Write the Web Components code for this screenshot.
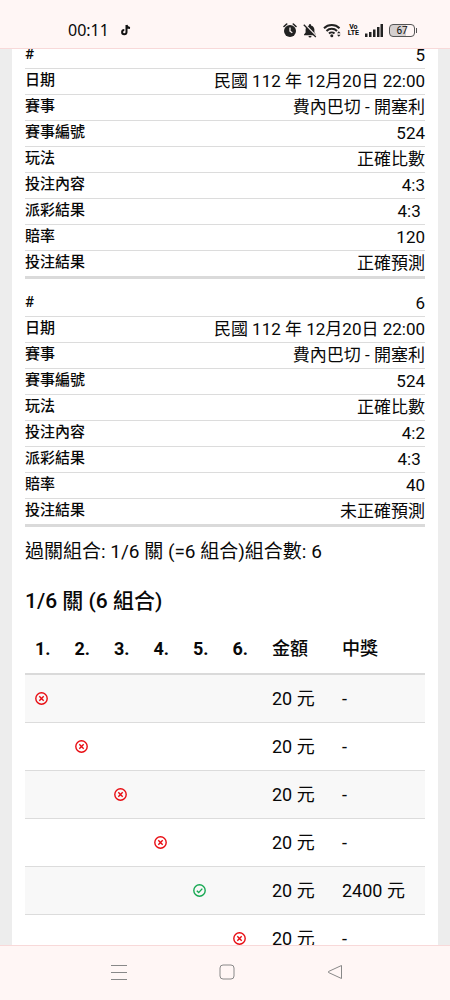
<!DOCTYPE html>
<html lang="zh-Hant">
<head>
<meta charset="utf-8">
<meta name="viewport" content="width=device-width, initial-scale=1">
<title>投注紀錄</title>
<style>
	body {
		margin: 0;
		height: 100vh;
		display: flex;
		flex-direction: column;
		background: #ededed;
		color: #080808;
		font-family: Roboto, 'Noto Sans CJK TC', sans-serif;
	}
</style>
</head>
<body>
<status-bar time="00:11" battery="67"></status-bar>
<scroll-view offset="18">
	<bet-record number="5" pick="4:3" score="4:3" odds="120" result="正確預測"></bet-record>
	<bet-record number="6" pick="4:2" score="4:3" odds="40" result="未正確預測"></bet-record>
	<combo-section>
		<span slot="summary">過關組合: 1/6 關 (=6 組合)組合數: 6</span>
		<span slot="title">1/6 關 (6 組合)</span>
		<combo-table legs="6" winner="5" prize="2400 元"></combo-table>
	</combo-section>
</scroll-view>
<nav-bar></nav-bar>

<script>
class StatusBar extends HTMLElement {
	constructor() {
		super();
		this.root = this.attachShadow({ mode: 'open' });
	}
	connectedCallback() {
		this.root.innerHTML = `
			<style>
				:host {
					display: flex;
					flex: none;
					align-items: center;
					justify-content: space-between;
					box-sizing: border-box;
					height: 49px;
					padding: 12px 33px 0 68px;
					background: #fff6f5;
					border-bottom: 1px solid #f8d9d9;
				}
				.group {
					display: flex;
					align-items: center;
				}
				.clock {
					gap: 12px;
					font: 16px/18px 'Noto Sans', sans-serif;
				}
				.icons {
					gap: 6px;
				}
				svg {
					display: block;
				}
				.volte {
					font: bold 7px/6px Roboto, sans-serif;
					text-align: center;
				}
				.battery {
					display: flex;
					align-items: center;
					gap: 1px;
				}
				.level {
					width: 26px;
					box-sizing: border-box;
					border: 1px solid #555;
					border-radius: 4px;
					background: linear-gradient(90deg, #d5d0d0 67%, transparent 67%);
					font: 10px/11px Roboto, sans-serif;
					text-align: center;
				}
				.tip {
					width: 1px;
					height: 5px;
					background: #555;
				}
			</style>
			<div class="group clock">
				<span>${this.getAttribute('time')}</span>
				<svg width="10" height="12" viewBox="0 0 10 12" fill="none" stroke="#111" stroke-width="2">
					<path d="M5.5 1v7.2a2.2 2.2 0 1 1-2.2-2.3M5.5 1c.3 1.8 1.5 2.8 3.5 3"/>
				</svg>
			</div>
			<div class="group icons">
				<svg width="14" height="15" viewBox="0 0 14 15">
					<circle cx="7" cy="8" r="6" fill="#222"/>
					<path d="M1 3.5 3.7 1M13 3.5 10.3 1" stroke="#222" stroke-width="1.6" stroke-linecap="round"/>
					<path d="M7 4.5V8.2L9.3 9.8" fill="none" stroke="#fff6f5" stroke-width="1.3"/>
				</svg>
				<svg width="14" height="15" viewBox="0 0 14 15">
					<path d="M7 1a1 1 0 0 1 1 1v.4c2 .5 3.400 2 3.400 4.200v3L13 11.500v.7H1v-.7l1.600-1.900v-3C2.600 4.400 4 2.900 6 2.400V2a1 1 0 0 1 1-1zM5.500 13h3a1.500 1.500 0 0 1-3 0z" fill="#222"/>
					<path d="M1.500 1 13.500 13.500" stroke="#fff6f5" stroke-width="1.800"/>
					<path d="M.8 1.800 12.800 14" stroke="#222" stroke-width="1.300"/>
				</svg>
				<svg width="19" height="15" viewBox="0 0 19 15" fill="none" stroke="#222" stroke-width="2">
					<path d="M1 5.300a11 11 0 0 1 15.500 0M3.500 8a7.500 7.500 0 0 1 10.500 0M6 10.500a4 4 0 0 1 5.500 0"/>
					<circle cx="8.800" cy="12.800" r="1.500" fill="#222" stroke="none"/>
					<path d="M14 10.300l1.800-2 1.800 2zM14 11.700l1.800 2 1.800-2z" fill="#222" stroke="none"/>
				</svg>
				<div class="volte">Vo<br>LTE</div>
				<svg width="18" height="13" viewBox="0 0 18 13" fill="#222">
					<path d="M0 9.500h2.500V13H0zM4 8h2.500v5H4zM8 5.500h2.500V13H8zM12 3h2.500v10H12zM15.500 0H18v13h-2.500z"/>
				</svg>
				<div class="battery">
					<div class="level">${this.getAttribute('battery')}</div>
					<div class="tip"></div>
				</div>
			</div>
		`;
	}
}

class ScrollView extends HTMLElement {
	constructor() {
		super();
		this.root = this.attachShadow({ mode: 'open' });
		this.root.innerHTML = `
			<style>
				:host {
					display: block;
					flex: 1;
					min-height: 0;
					margin: 0 12px;
					overflow: hidden;
					background: #fff;
				}
				.content {
					padding: 0 13px;
				}
			</style>
			<div class="content"><slot></slot></div>
		`;
	}
	restore() {
		this.scrollTop = Number(this.getAttribute('offset'));
	}
}

class BetRecord extends HTMLElement {
	constructor() {
		super();
		this.root = this.attachShadow({ mode: 'open' });
	}
	connectedCallback() {
		const rows = [
			['#', this.getAttribute('number')],
			['日期', '民國 112 年 12月20日 22:00'],
			['賽事', '費內巴切 - 開塞利'],
			['賽事編號', '524'],
			['玩法', '正確比數'],
			['投注內容', this.getAttribute('pick')],
			['派彩結果', this.getAttribute('score') + '&nbsp;'],
			['賠率', this.getAttribute('odds')],
			['投注結果', this.getAttribute('result')],
		];
		this.root.innerHTML = `
			<style>
				:host {
					display: block;
					padding-top: 12px;
					border-bottom: 3px solid #dadada;
				}
				table {
					width: 100%;
					border-spacing: 0;
				}
				th, td {
					height: 25px;
					padding: 0;
					border-bottom: 1px solid #dcdcdc;
					vertical-align: top;
				}
				tr:last-child > * {
					border-bottom: 0;
				}
				th {
					font-size: 15px;
					line-height: 22px;
					font-weight: 500;
					text-align: left;
				}
				td {
					font-size: 17px;
					line-height: 25px;
					text-align: right;
				}
			</style>
			<table>
				${rows.map(([name, value]) => `<tr><th scope="row">${name}</th><td>${value}</td></tr>`).join('')}
			</table>
		`;
	}
}

class ComboSection extends HTMLElement {
	constructor() {
		super();
		this.root = this.attachShadow({ mode: 'open' });
		this.root.innerHTML = `
			<style>
				:host {
					display: block;
				}
				p {
					margin: 12px 0 23px;
					font-size: 19px;
					line-height: 26px;
				}
				h2 {
					margin: 0 0 10px;
					font-size: 21px;
					line-height: 26px;
					font-weight: 500;
				}
			</style>
			<p><slot name="summary"></slot></p>
			<h2><slot name="title"></slot></h2>
			<slot></slot>
		`;
	}
}

class ComboTable extends HTMLElement {
	constructor() {
		super();
		this.root = this.attachShadow({ mode: 'open' });
	}
	connectedCallback() {
		const legs = Number(this.getAttribute('legs'));
		const winner = Number(this.getAttribute('winner'));
		const numbers = Array.from({ length: legs }, (_, i) => i + 1);
		const row = (n) => `
			<tr>
				${numbers.map((leg) => `<td>${leg === n ? `<result-mark ${n === winner ? 'won' : ''}></result-mark>` : ''}</td>`).join('')}
				<td>20 元</td>
				<td>${n === winner ? this.getAttribute('prize') : '-'}</td>
			</tr>`;
		this.root.innerHTML = `
			<style>
				:host {
					display: block;
				}
				table {
					width: 100%;
					table-layout: fixed;
					border-spacing: 0;
					font-size: 18px;
					line-height: 24px;
				}
				th, td {
					box-sizing: border-box;
					height: 48px;
					padding: 0 0 0 10px;
					text-align: left;
					white-space: nowrap;
				}
				th {
					height: 51px;
					border-bottom: 2px solid #dadada;
					font-weight: 700;
				}
				th.text {
					font-weight: 500;
				}
				.amount {
					width: 70px;
				}
				.prize {
					width: 93px;
				}
				td {
					border-bottom: 1px solid #dcdcdc;
				}
				tbody tr:nth-child(odd) {
					background: #f8f8f8;
				}
			</style>
			<table>
				<thead>
					<tr>
						${numbers.map((n) => `<th scope="col">${n}.</th>`).join('')}
						<th scope="col" class="text amount">金額</th>
						<th scope="col" class="text prize">中獎</th>
					</tr>
				</thead>
				<tbody>${numbers.map(row).join('')}</tbody>
			</table>
		`;
	}
}

class ResultMark extends HTMLElement {
	constructor() {
		super();
		this.root = this.attachShadow({ mode: 'open' });
	}
	connectedCallback() {
		const won = this.hasAttribute('won');
		this.root.innerHTML = `
			<style>
				:host {
					display: block;
					color: ${won ? '#16a852' : '#e80c12'};
				}
				svg {
					display: block;
				}
			</style>
			<svg width="13" height="13" viewBox="0 0 13 13" fill="none" stroke="currentColor" stroke-width="1.4">
				<circle cx="6.500" cy="6.500" r="5.700"/>
				<path d="${won ? 'M3.800 6.800 5.700 8.600 9.300 4.600' : 'M4.300 4.300l4.400 4.400M8.700 4.300 4.300 8.700'}"/>
			</svg>
		`;
	}
}

class NavBar extends HTMLElement {
	constructor() {
		super();
		this.root = this.attachShadow({ mode: 'open' });
		this.root.innerHTML = `
			<style>
				:host {
					display: flex;
					flex: none;
					align-items: center;
					justify-content: center;
					gap: 92px;
					box-sizing: border-box;
					height: 55px;
					padding: 0 0 2px 3px;
					background: #fff6f5;
					border-top: 1px solid #f8d9d9;
				}
				button {
					padding: 0;
					border: 0;
					background: none;
				}
				svg {
					display: block;
					fill: none;
					stroke: #888;
				}
			</style>
			<button aria-label="Recent apps">
				<svg width="16" height="16" viewBox="0 0 16 16"><path d="M0 1.500h16M0 8.500h16M0 15.500h16"/></svg>
			</button>
			<button aria-label="Home">
				<svg width="16" height="16" viewBox="0 0 16 16"><rect x="1" y="1" width="14" height="14" rx="3"/></svg>
			</button>
			<button aria-label="Back">
				<svg width="16" height="16" viewBox="0 0 16 16"><path d="M14.500 1.500v13L1.500 8.500v-1z" stroke-linejoin="round"/></svg>
			</button>
		`;
	}
}

customElements.define('status-bar', StatusBar);
customElements.define('scroll-view', ScrollView);
customElements.define('bet-record', BetRecord);
customElements.define('combo-section', ComboSection);
customElements.define('result-mark', ResultMark);
customElements.define('combo-table', ComboTable);
customElements.define('nav-bar', NavBar);

document.querySelector('scroll-view').restore();
</script>
</body>
</html>
